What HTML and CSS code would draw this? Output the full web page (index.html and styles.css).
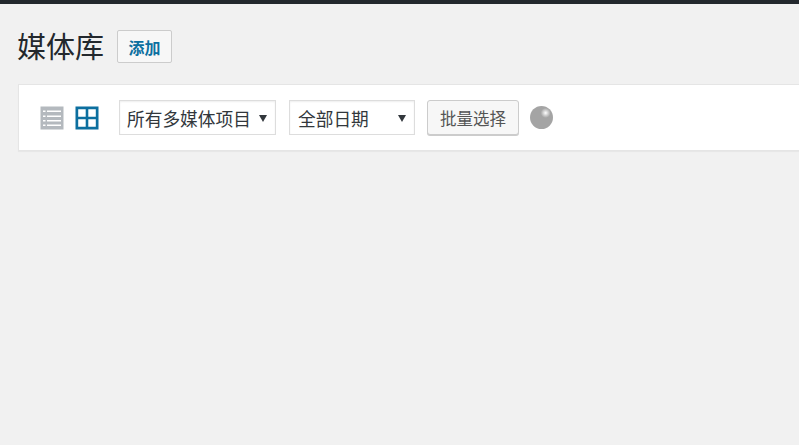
FILE: index.html
```html
<!DOCTYPE html>
<html lang="zh-CN">
<head>
    <meta charset="UTF-8">
    <title>媒体库</title>
    <link rel="stylesheet" href="styles.css">
</head>
<body>
    <div class="admin-bar"></div>
    <div class="wrap">
        <div class="page-head">
            <h1>媒体库</h1>
            <a href="#" class="add-btn">添加</a>
        </div>
        <div class="toolbar">
            <div class="view-switch">
                <svg class="icon icon-list" width="24" height="24" viewBox="0 0 24 24">
                    <path d="M0.500 0.500h23v23h-23z M3 6h2.500V4.500H3z M7 6h14V4.500H7z M3 11h2.500V9.500H3z M7 11h14V9.500H7z M3 15.500h2.500V14H3z M7 15.500h14V14H7z M3 20h2.500v-1.500H3z M7 20h14v-1.500H7z" fill-rule="evenodd"/>
                </svg>
                <svg class="icon icon-grid" width="24" height="24" viewBox="0 0 24 24">
                    <path d="M0.500 0.500h23v23h-23z M3.200 10.700h7.500V3.200H3.200z M13.300 10.700h7.500V3.200h-7.500z M3.200 20.800h7.500v-7.500H3.200z M13.300 20.800h7.500v-7.500h-7.500z" fill-rule="evenodd"/>
                </svg>
            </div>
            <div class="filter filter-type">
                <span>所有多媒体项目</span>
                <i class="arrow"></i>
            </div>
            <div class="filter filter-date">
                <span>全部日期</span>
                <i class="arrow"></i>
            </div>
            <button class="select-btn">批量选择</button>
            <div class="spinner"></div>
        </div>
    </div>
</body>
</html>
```

FILE: styles.css
```css
* {
    margin: 0;
    padding: 0;
    box-sizing: border-box;
}

html, body {
    height: 100%;
    overflow: hidden;
}

body {
    background: #f1f1f1;
    color: #23282d;
    font-family: "Liberation Sans", "Noto Sans CJK SC", sans-serif;
}

.admin-bar {
    height: 4px;
    background: #23282d;
}

.wrap {
    padding: 26px 0 0 18px;
}

.page-head {
    display: flex;
    align-items: center;
    height: 33px;
    margin-bottom: 21px;
}

.page-head h1 {
    margin: 3px 0 0 -1px;
    font-size: 29px;
    font-weight: 400;
    line-height: 33px;
    color: #23282d;
}

.add-btn {
    display: flex;
    align-items: center;
    justify-content: center;
    width: 55px;
    height: 33px;
    margin-left: 13px;
    background: #f7f7f7;
    border: 1px solid #ccc;
    border-radius: 2px;
    color: #0c6f9f;
    font-size: 16px;
    font-weight: 700;
    text-decoration: none;
}

.toolbar {
    display: flex;
    align-items: center;
    height: 67px;
    padding-left: 21px;
    background: #fff;
    border: 1px solid #e5e5e5;
    border-right: 0;
    box-shadow: 0 1px 1px rgba(0, 0, 0, 0.04);
}

.view-switch {
    display: flex;
    gap: 11px;
    margin-right: 20px;
}

.icon {
    display: block;
}

.icon-list {
    fill: #b4b9be;
}

.icon-grid {
    fill: #0c6f9f;
}

.filter {
    display: flex;
    align-items: center;
    justify-content: space-between;
    height: 35px;
    padding: 0 8px 0 7px;
    background: #fff;
    border: 1px solid #ddd;
    box-shadow: inset 0 1px 2px rgba(0, 0, 0, 0.07);
    color: #32373c;
    font-size: 17.700px;
}

.filter-type {
    width: 157px;
    margin-right: 13px;
}

.filter-date {
    width: 126px;
    margin-right: 12px;
}

.filter-date span {
    margin-left: 1px;
}

.arrow {
    width: 0;
    height: 0;
    margin-top: 1px;
    border-left: 4px solid transparent;
    border-right: 4px solid transparent;
    border-top: 7px solid #32373c;
}

.select-btn {
    width: 92px;
    height: 35px;
    margin-right: 11px;
    background: #f7f7f7;
    border: 1px solid #ccc;
    border-radius: 3px;
    box-shadow: 0 1px 0 #ccc;
    color: #555;
    font-family: inherit;
    font-size: 16.500px;
}

.spinner {
    width: 23px;
    height: 23px;
    border-radius: 50%;
    background: radial-gradient(circle at 68% 30%, #fff 0, #ddd 8%, #a4a4a4 22%, #a4a4a4 100%);
}
```
